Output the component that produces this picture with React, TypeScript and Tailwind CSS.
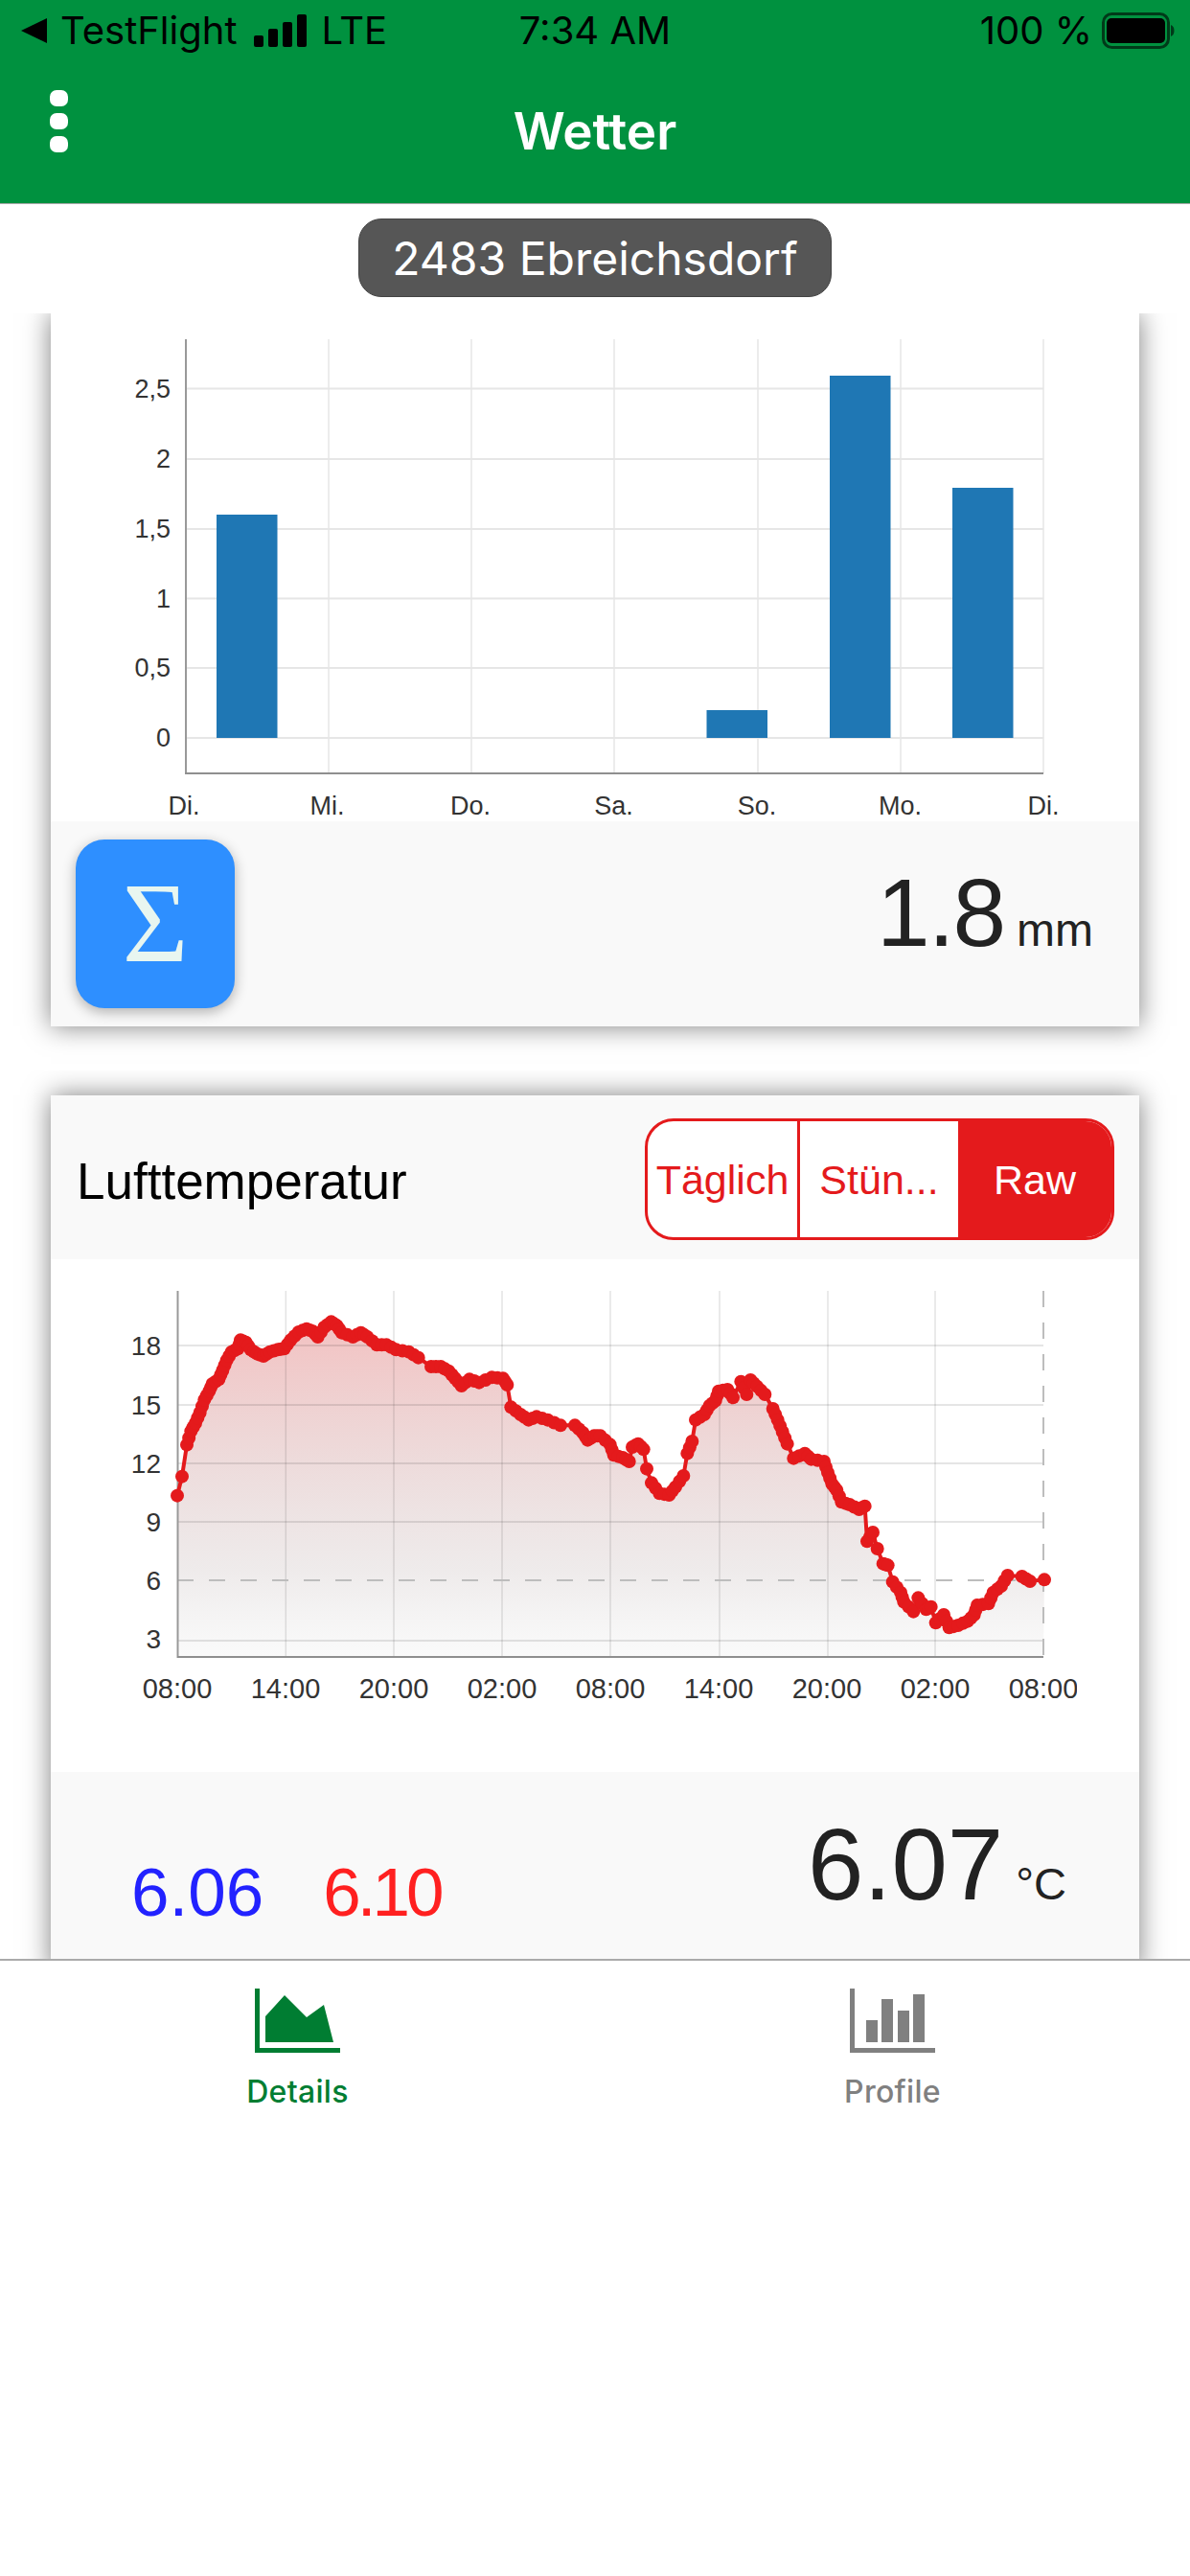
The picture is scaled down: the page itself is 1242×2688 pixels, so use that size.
const RAW_LEFT = [
  [195,722],[210,662],[225,563],[238,520],[252,495],[266,462],[280,422],[295,395],[305,372],[325,358],[337,330],[350,298],[365,272],[385,262],[393,235],[410,242],[425,265],[445,278],[465,285],[485,272],[510,265],[530,262],[550,235],[575,210],[600,200],[620,208],[635,225],[655,195],[677,178],[695,190],[710,212],[745,225],[770,212],[790,225],[820,250],[850,250],[880,265],[920,272],[950,290],[990,318],[1020,318],[1045,332],[1065,355],[1085,378],[1110,358],[1140,368],[1180,352],[1215,355],[1228,375],[1240,445],[1270,468],[1295,485],[1320,475],[1355,485],[1395,502],[1440,502],[1465,525],[1480,548],
]
const RAW_RIGHT = [
  [0,535],[20,535],[50,562],[62,595],[90,603],[110,615],[120,570],[138,560],[155,577],[165,638],[180,682],[205,715],[235,720],[255,695],[280,660],[292,590],[307,552],[318,485],[345,468],[362,440],[380,425],[390,395],[418,390],[435,415],[460,365],[478,405],[490,360],[510,380],[535,405],[560,450],[575,485],[590,522],[605,560],[625,605],[660,590],[680,608],[720,615],[732,650],[745,685],[760,705],[775,742],[800,750],[830,765],[848,755],[855,865],[873,837],[887,888],[905,935],[920,940],[935,992],[960,1025],[970,1055],[1000,1085],[1015,1042],[1040,1078],[1055,1070],[1070,1120],[1095,1095],[1112,1135],[1140,1128],[1170,1115],[1190,1095],[1200,1065],[1235,1060],[1250,1025],[1275,1005],[1295,972],[1340,975],[1365,990],[1410,985],
]

// crop coords -> page coords
const TEMP_POINTS = [
  ...RAW_LEFT.map(([x, y]) => [120 + x / 3, 1320 + y / 3]),
  ...RAW_RIGHT.map(([x, y]) => [620 + x / 3, 1320 + y / 3]),
]

// extra dots between close points so the line looks beaded like the real chart
const TEMP_DOTS: number[][] = []
TEMP_POINTS.forEach((p, i) => {
  TEMP_DOTS.push(p)
  const next = TEMP_POINTS[i + 1]
  if (next && Math.hypot(next[0] - p[0], next[1] - p[1]) < 15) {
    TEMP_DOTS.push([(p[0] + next[0]) / 2, (p[1] + next[1]) / 2])
  }
})

const LINE = TEMP_POINTS.map((p) => p.join(',')).join(' ')
const AREA = `185,1729 ${LINE} 1089,1729`

function RainChart() {
  const hLines = [405.5, 479, 552, 624.5, 697, 770]
  const vLines = [343, 492, 641, 791, 940, 1089]
  const yLabels = ['2,5', '2', '1,5', '1', '0,5', '0']
  const xLabels = ['Di.', 'Mi.', 'Do.', 'Sa.', 'So.', 'Mo.', 'Di.']
  const bars = [
    [226, 537],
    [737.5, 741],
    [866, 392],
    [994, 509],
  ]
  return (
    <svg width="1137" height="530" viewBox="53 327 1137 530" className="block">
      {hLines.map((y) => (
        <line key={y} x1="194" x2="1089" y1={y} y2={y} stroke="#e6e6e6" strokeWidth="2" />
      ))}
      {vLines.map((x) => (
        <line key={x} x1={x} x2={x} y1="354" y2="807" stroke="#e6e6e6" strokeWidth="1.5" />
      ))}
      <line x1="194" x2="194" y1="354" y2="808" stroke="#999" strokeWidth="2" />
      <line x1="193" x2="1089" y1="807" y2="807" stroke="#8f8f8f" strokeWidth="2" />
      {bars.map(([x, top]) => (
        <rect key={x} x={x} y={top} width="63.5" height={770 - top} fill="#1f77b4" />
      ))}
      {yLabels.map((t, i) => (
        <text key={t} x="178" y={hLines[i] + 9} textAnchor="end" fontSize="27" fill="#333">
          {t}
        </text>
      ))}
      {xLabels.map((t, i) => (
        <text key={i} x={192 + i * 149.5} y="850" textAnchor="middle" fontSize="27" fill="#333">
          {t}
        </text>
      ))}
    </svg>
  )
}

function TempChart() {
  const hLines = [1404, 1466, 1527, 1588, 1712]
  const vLines = [298.3, 411, 524, 637, 751, 864, 976]
  const yLabels = [
    ['18', 1404],
    ['15', 1466],
    ['12', 1527],
    ['9', 1588],
    ['6', 1649],
    ['3', 1710],
  ] as const
  const xLabels = ['08:00', '14:00', '20:00', '02:00', '08:00', '14:00', '20:00', '02:00', '08:00']
  return (
    <svg width="1071" height="535" viewBox="53 1314 1071 535" className="block">
      <defs>
        <linearGradient id="tempFill" gradientUnits="userSpaceOnUse" x1="0" x2="0" y1="1370" y2="1729">
          <stop offset="0" stopColor="#d92b2b" stopOpacity="0.3" />
          <stop offset="0.75" stopColor="#8a7070" stopOpacity="0.14" />
          <stop offset="1" stopColor="#888" stopOpacity="0.04" />
        </linearGradient>
      </defs>
      <polygon points={AREA} fill="url(#tempFill)" />
      {hLines.map((y) => (
        <line key={y} x1="185" x2="1089" y1={y} y2={y} stroke="#000" strokeOpacity="0.1" strokeWidth="2" />
      ))}
      {vLines.map((x) => (
        <line key={x} x1={x} x2={x} y1="1347" y2="1729" stroke="#000" strokeOpacity="0.11" strokeWidth="1.5" />
      ))}
      <line x1="185" x2="1089" y1="1649" y2="1649" stroke="#bdbdbd" strokeWidth="2" strokeDasharray="17 16" />
      <line x1="1089" x2="1089" y1="1347" y2="1729" stroke="#bdbdbd" strokeWidth="2" strokeDasharray="17 16" />
      <line x1="185.5" x2="185.5" y1="1347" y2="1730" stroke="#999" strokeWidth="2" />
      <line x1="185" x2="1089" y1="1729" y2="1729" stroke="#8f8f8f" strokeWidth="2" />
      <polyline points={LINE} fill="none" stroke="#e41a1c" strokeWidth="4" />
      {TEMP_DOTS.map(([x, y], i) => (
        <circle key={i} cx={x} cy={y} r="7" fill="#e41a1c" />
      ))}
      {yLabels.map(([t, y]) => (
        <text key={t} x="168" y={y + 10} textAnchor="end" fontSize="28" fill="#333">
          {t}
        </text>
      ))}
      {xLabels.map((t, i) => (
        <text key={i} x={185 + i * 113} y="1772" textAnchor="middle" fontSize="29" fill="#333">
          {t}
        </text>
      ))}
    </svg>
  )
}

function StatusBar() {
  return (
    <div className="grid h-[64px] grid-cols-[1fr_auto_1fr] items-center pl-[22px] pr-[16px] font-['Inter'] text-[40px] leading-none text-black">
      <div className="flex items-center">
        <svg width="27" height="26" viewBox="0 0 27 26" className="mr-[14px]">
          <polygon points="27,0 27,26 0,13" fill="#000" />
        </svg>
        <span>TestFlight</span>
        <svg width="56" height="34" viewBox="0 0 56 34" className="ml-[18px] mr-[14px]">
          <rect x="0" y="22" width="10" height="12" rx="2" fill="#000" />
          <rect x="15" y="15" width="10" height="19" rx="2" fill="#000" />
          <rect x="30" y="8" width="10" height="26" rx="2" fill="#000" />
          <rect x="45" y="0" width="10" height="34" rx="2" fill="#000" />
        </svg>
        <span>LTE</span>
      </div>
      <span className="-translate-x-[3px]">7:34 AM</span>
      <div className="flex items-center justify-end">
        <span>100 %</span>
        <svg width="76" height="38" viewBox="0 0 76 38" className="ml-[10px]">
          <rect x="1.5" y="1.5" width="68" height="35" rx="9" fill="none" stroke="#000" strokeOpacity="0.6" strokeWidth="3" />
          <rect x="5" y="6" width="61" height="26" rx="5" fill="#000" />
          <path d="M72 13c2.5 1 3.5 3 3.5 6s-1 5-3.5 6z" fill="#000" fillOpacity="0.6" />
        </svg>
      </div>
    </div>
  )
}

export default function App() {
  return (
    <div className="flex h-[2688px] w-[1242px] flex-col overflow-hidden bg-white font-['Liberation_Sans',sans-serif]">
      {/* Header */}
      <header className="h-[213px] shrink-0 border-b border-[#aaa] bg-[#00913f]">
        <StatusBar />
        <div className="relative flex h-[150px] items-center justify-center pb-[4px]">
          <div className="absolute left-[52px] top-[30px] flex flex-col gap-[7px]">
            <span className="h-[17px] w-[19px] rounded-[7px] bg-white" />
            <span className="h-[17px] w-[19px] rounded-[7px] bg-white" />
            <span className="h-[17px] w-[19px] rounded-[7px] bg-white" />
          </div>
          <h1 className="font-['Inter'] text-[53px] font-semibold leading-none text-white">Wetter</h1>
        </div>
      </header>

      {/* Location pill */}
      <div className="flex h-[114px] shrink-0 items-start justify-center pt-[15px]">
        <div className="flex h-[82px] w-[494px] items-center justify-center rounded-[24px] border border-[#444] bg-[#565656] pt-[2px] font-['Inter'] text-[48px] leading-none text-white">
          2483 Ebreichsdorf
        </div>
      </div>

      {/* Cards */}
      <main className="h-[1717px] shrink-0 overflow-hidden">
        <div className="h-[790px] overflow-hidden px-[53px]">
          <section className="h-[744px] bg-white shadow-[0_0_26px_rgba(0,0,0,0.5)]">
            <RainChart />
            <div className="flex h-[214px] items-start justify-between bg-[#f9f9f9] pl-[26px] pr-[48px] pt-[19px]">
              <div className="flex h-[176px] w-[166px] items-center justify-center rounded-[30px] bg-[#2e8fff] font-['Liberation_Serif',serif] text-[118px] leading-none text-[#e8f6f0] shadow-[0_4px_14px_rgba(0,0,0,0.3)]">
                Σ
              </div>
              <div className="mt-[26px] flex items-baseline gap-[13px] text-[#222]">
                <span className="text-[100px] leading-none tracking-[-2px]">1.8</span>
                <span className="text-[48px] leading-none">mm</span>
              </div>
            </div>
          </section>
        </div>

        <div className="overflow-hidden px-[53px] pb-[30px] pt-[26px]">
          <section className="bg-white shadow-[0_0_26px_rgba(0,0,0,0.5)]">
            <div className="flex h-[171px] items-center justify-between bg-[#f9f9f9] pl-[27px] pr-[26px] pt-[3px]">
              <h2 className="mt-[5px] text-[53px] font-normal leading-none text-black">Lufttemperatur</h2>
              <div className="flex h-[127px] w-[490px] overflow-hidden rounded-[30px] border-[3px] border-[#e41a1c] bg-white text-[43px] leading-none text-[#e41a1c]">
                <div className="flex w-[159px] items-center justify-center border-r-[3px] border-[#e41a1c] pt-[3px]">Täglich</div>
                <div className="flex w-[165px] items-center justify-center pt-[3px]">Stün...</div>
                <div className="flex flex-1 items-center justify-center bg-[#e41a1c] pt-[3px] text-white">Raw</div>
              </div>
            </div>
            <TempChart />
            <div className="flex h-[210px] items-start justify-between bg-[#f9f9f9] pl-[84px] pr-[76px]">
              <div className="mt-[90px] flex gap-[62px] text-[71px] leading-none">
                <span className="text-[#2222ff]">6.06</span>
                <span className="tracking-[-4px] text-[#ff2020]">6.10</span>
              </div>
              <div className="mt-[44px] flex items-baseline gap-[13px] text-[#222]">
                <span className="text-[105px] leading-none">6.07</span>
                <span className="text-[47px] leading-none">°C</span>
              </div>
            </div>
          </section>
        </div>
      </main>

      {/* Tab bar */}
      <nav className="grid flex-1 grid-cols-2 content-start border-t-2 border-[#aaa] bg-white pt-[29px] font-['Inter'] text-[32px] font-medium leading-none tracking-[0.3px]">
        <div className="flex flex-col items-center gap-[24px] text-[#007d32]">
          <svg width="90" height="68" viewBox="265 2076 90 68">
            <path d="M265 2076h5v62h84v5h-89z" fill="#007d32" />
            <polygon points="276,2132 276,2105 296,2083 319,2106 337,2093 347,2132" fill="#007d32" />
          </svg>
          <span>Details</span>
        </div>
        <div className="flex flex-col items-center gap-[24px] text-[#808080]">
          <svg width="90" height="68" viewBox="886 2076 90 68">
            <path d="M886 2076h5v62h84v5h-89z" fill="#808080" />
            <rect x="903" y="2109" width="12" height="23" fill="#808080" />
            <rect x="919" y="2087" width="12" height="45" fill="#808080" />
            <rect x="936" y="2099" width="12" height="33" fill="#808080" />
            <rect x="952" y="2082" width="12" height="50" fill="#808080" />
          </svg>
          <span>Profile</span>
        </div>
      </nav>
    </div>
  )
}
